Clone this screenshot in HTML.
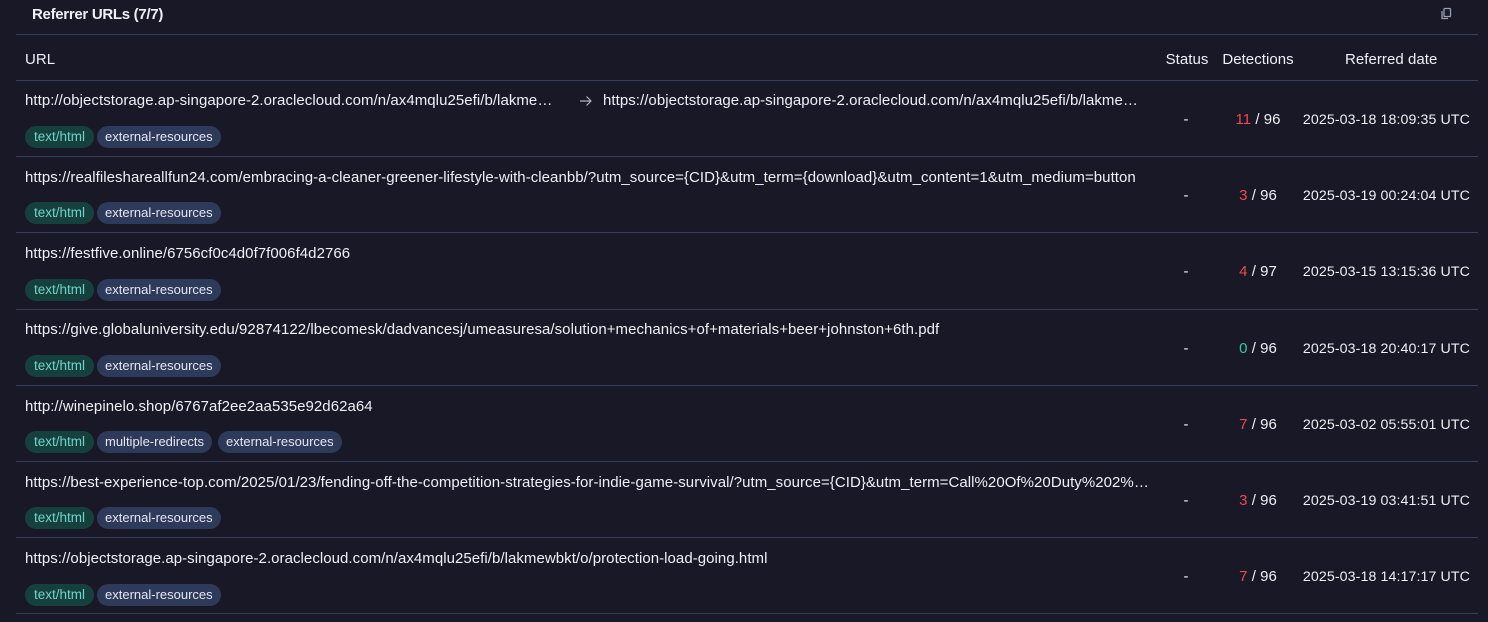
<!DOCTYPE html>
<html><head><meta charset="utf-8"><style>
*{box-sizing:border-box;margin:0;padding:0}
body{width:1488px;height:622px;background:#181826;color:#eef0f6;font-family:"Liberation Sans",sans-serif;font-size:15px;overflow:hidden;position:relative}
.title{position:absolute;left:32px;top:6px;font-weight:bold;font-size:15px;letter-spacing:-0.3px}
.copy{position:absolute;left:1439px;top:7px}
.hl{position:absolute;left:16px;width:1462px;height:1px;background:#37405a}
.t{position:absolute;white-space:nowrap;letter-spacing:0.05px}
.c{text-align:center}
.st{left:1166px;width:40px}
.de{left:1218px;width:80px}
.da{left:1290px;width:180px;text-align:right;font-size:14.2px;letter-spacing:0.1px;margin-top:1px}
.tag{position:absolute;height:22px;border-radius:11px;padding:0 8px;line-height:22px;font-size:13px;letter-spacing:0;white-space:nowrap}
.th{background:#16403e;color:#6fd3c6;padding:0 9px;font-size:13.5px}
.te{background:#2e3a5a;color:#e3e7f2}
.red{color:#f0484e}.grn{color:#35c9a5}
</style></head><body>
<div class="title">Referrer URLs (7/7)</div>
<svg class="copy" width="14" height="14" viewBox="0 0 14 14" fill="none" stroke="#9aa0ad" stroke-width="1.3"><rect x="5" y="1.5" width="6.5" height="8" rx="0.8"/><path d="M3 4v7.5h6"/></svg>
<div class="hl" style="top:34px"></div>
<div class="t" style="left:25px;top:51px">URL</div>
<div class="t c st" style="left:1162px;width:50px;top:51px">Status</div>
<div class="t c de" style="left:1213px;width:90px;top:51px">Detections</div>
<div class="t" style="left:1345px;top:51px">Referred date</div>
<div class="hl" style="top:80px"></div>

<div class="t" style="left:25px;top:92px;width:534px;overflow:hidden;text-overflow:ellipsis">http://objectstorage.ap-singapore-2.oraclecloud.com/n/ax4mqlu25efi/b/lakmewbkt/o/x</div>
<svg style="position:absolute;left:579px;top:95px" width="14" height="12" viewBox="0 0 14 12" fill="none" stroke="#b0b4be" stroke-width="1.2"><path d="M1 6h11M7.5 1.5L12 6l-4.5 4.5"/></svg>
<div class="t" style="left:603px;top:92px;width:542px;overflow:hidden;text-overflow:ellipsis">https://objectstorage.ap-singapore-2.oraclecloud.com/n/ax4mqlu25efi/b/lakmewbkt/o/x</div>
<div class="tag th" style="left:25px;top:126px">text/html</div><div class="tag te" style="left:97px;top:126px">external-resources</div>
<div class="t c st" style="top:111px">-</div><div class="t c de" style="top:111px"><span class="red">11</span> / 96</div><div class="t da" style="top:111px">2025-03-18 18:09:35 UTC</div>
<div class="hl" style="top:156px"></div>

<div class="t" style="left:25px;top:169px;width:1120px;overflow:hidden">https://realfileshareallfun24.com/embracing-a-cleaner-greener-lifestyle-with-cleanbb/?utm_source={CID}&amp;utm_term={download}&amp;utm_content=1&amp;utm_medium=button</div>
<div class="tag th" style="left:25px;top:202px">text/html</div><div class="tag te" style="left:97px;top:202px">external-resources</div>
<div class="t c st" style="top:187px">-</div><div class="t c de" style="top:187px"><span class="red">3</span> / 96</div><div class="t da" style="top:187px">2025-03-19 00:24:04 UTC</div>
<div class="hl" style="top:232px"></div>

<div class="t" style="left:25px;top:245px">https://festfive.online/6756cf0c4d0f7f006f4d2766</div>
<div class="tag th" style="left:25px;top:279px">text/html</div><div class="tag te" style="left:97px;top:279px">external-resources</div>
<div class="t c st" style="top:263px">-</div><div class="t c de" style="top:263px"><span class="red">4</span> / 97</div><div class="t da" style="top:263px">2025-03-15 13:15:36 UTC</div>
<div class="hl" style="top:309px"></div>

<div class="t" style="left:25px;top:321px">https://give.globaluniversity.edu/92874122/lbecomesk/dadvancesj/umeasuresa/solution+mechanics+of+materials+beer+johnston+6th.pdf</div>
<div class="tag th" style="left:25px;top:355px">text/html</div><div class="tag te" style="left:97px;top:355px">external-resources</div>
<div class="t c st" style="top:340px">-</div><div class="t c de" style="top:340px"><span class="grn">0</span> / 96</div><div class="t da" style="top:340px">2025-03-18 20:40:17 UTC</div>
<div class="hl" style="top:385px"></div>

<div class="t" style="left:25px;top:398px">http://winepinelo.shop/6767af2ee2aa535e92d62a64</div>
<div class="tag th" style="left:25px;top:431px">text/html</div><div class="tag te" style="left:97px;top:431px">multiple-redirects</div><div class="tag te" style="left:218px;top:431px">external-resources</div>
<div class="t c st" style="top:416px">-</div><div class="t c de" style="top:416px"><span class="red">7</span> / 96</div><div class="t da" style="top:416px">2025-03-02 05:55:01 UTC</div>
<div class="hl" style="top:461px"></div>

<div class="t" style="left:25px;top:474px;width:1124px;overflow:hidden;text-overflow:ellipsis">https://best-experience-top.com/2025/01/23/fending-off-the-competition-strategies-for-indie-game-survival/?utm_source={CID}&amp;utm_term=Call%20Of%20Duty%202%20Modern%20Warfare</div>
<div class="tag th" style="left:25px;top:507px">text/html</div><div class="tag te" style="left:97px;top:507px">external-resources</div>
<div class="t c st" style="top:492px">-</div><div class="t c de" style="top:492px"><span class="red">3</span> / 96</div><div class="t da" style="top:492px">2025-03-19 03:41:51 UTC</div>
<div class="hl" style="top:537px"></div>

<div class="t" style="left:25px;top:550px">https://objectstorage.ap-singapore-2.oraclecloud.com/n/ax4mqlu25efi/b/lakmewbkt/o/protection-load-going.html</div>
<div class="tag th" style="left:25px;top:584px">text/html</div><div class="tag te" style="left:97px;top:584px">external-resources</div>
<div class="t c st" style="top:568px">-</div><div class="t c de" style="top:568px"><span class="red">7</span> / 96</div><div class="t da" style="top:568px">2025-03-18 14:17:17 UTC</div>
<div class="hl" style="top:613px"></div>
</body></html>
